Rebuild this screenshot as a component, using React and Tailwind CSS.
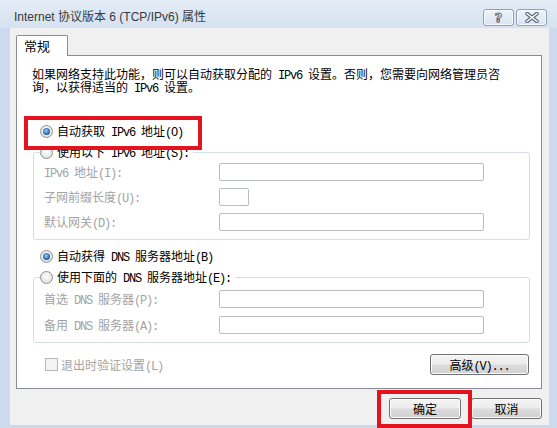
// SimSun-like text: ASCII runs get a narrow monospace (6px advance), CJK stays 12px
function T({ children }) {
  const parts = children.split(/([\x20-\x7e]+)/)
  return (
    <span className="whitespace-pre">
      {parts.map((p, i) =>
        /^[\x20-\x7e]+$/.test(p)
          ? <span key={i} className="font-['Liberation_Mono',monospace] text-[12px] tracking-[-1.2px] leading-[0]">{p}</span>
          : p
      )}
    </span>
  )
}

function Radio({ checked }) {
  return (
    <span className="w-[13px] h-[13px] rounded-full border border-[#8e8f8f] bg-[radial-gradient(circle_at_50%_40%,#ffffff,#e4e4e4_70%,#d0d0d0)] flex items-center justify-center shrink-0">
      {checked && (
        <span className="w-[7px] h-[7px] rounded-full bg-[radial-gradient(circle_at_45%_40%,#a6d0f2,#2d70b6_55%,#0f3b6e)]" />
      )}
    </span>
  )
}

function Field({ label, small }) {
  return (
    <div className="flex items-center h-[18px]">
      <span className="w-[175px] text-[#a3a3a3] whitespace-nowrap"><T>{label}</T></span>
      <span className={small ? 'w-[30px] h-[18px] border border-[#b8bcc2] rounded-[2px] bg-white' : 'w-[265px] h-[18px] border border-[#b8bcc2] rounded-[2px] bg-white'} />
    </div>
  )
}

function Btn({ children, className }) {
  return (
    <div className={`flex items-center justify-center h-[21px] border border-[#707070] rounded-[3px] bg-[linear-gradient(#f4f4f4_0%,#ececec_48%,#dcdcdc_52%,#d0d0d0_100%)] shadow-[inset_0_0_0_1px_#fcfcfc] text-black ${className}`}>
      {children}
    </div>
  )
}

function TitleBtn({ children }) {
  return (
    <div className="w-[31px] h-[17px] flex items-center justify-center border border-[#8e9fb8] rounded-[3px] bg-[linear-gradient(#eef3fa,#d9e3f0)] shadow-[inset_0_0_0_1px_#f7fafd]">
      {children}
    </div>
  )
}

export default function App() {
  return (
    <div className="relative w-[557px] h-[428px] overflow-hidden flex flex-col bg-[#cbdaed] font-['Noto_Sans_CJK_SC',sans-serif] text-[12px] leading-[12px] text-black">
      {/* title bar */}
      <div className="h-[28px] shrink-0 flex items-center pt-[6px] pl-[14px] pr-[10px] bg-[linear-gradient(#e4ecf6,#d6e2f1)]">
        <span className="flex-1 text-[12px] text-[#3a3a3a] font-['Liberation_Sans','Noto_Sans_CJK_SC',sans-serif] -mt-[1px]">
          Internet 协议版本 6 (TCP/IPv6) 属性
        </span>
        <div className="flex gap-[2px]">
          <TitleBtn>
            <span className="text-[13px] font-bold text-white [-webkit-text-stroke:1px_#55657c] font-['DejaVu_Sans',sans-serif] leading-[13px]">?</span>
          </TitleBtn>
          <TitleBtn>
            <svg width="14" height="11" viewBox="0 0 14 11">
              <path d="M2 1.5 L12 9.5 M12 1.5 L2 9.5" stroke="#55657c" strokeWidth="3.6" strokeLinecap="round" />
              <path d="M2 1.5 L12 9.5 M12 1.5 L2 9.5" stroke="#ffffff" strokeWidth="1.6" strokeLinecap="round" />
            </svg>
          </TitleBtn>
        </div>
      </div>

      {/* dialog body */}
      <div className="flex-1 ml-[10px] mr-[8px] mb-[3px] bg-[#f0f0f0] flex flex-col">
        <div className="pl-[6px] pt-[7px]">
          <div className="relative z-10 w-[52px] h-[21px] -mb-[1px] border border-b-0 border-[#898c95] rounded-t-[2px] bg-white flex items-center pl-[7px] text-[13px]">
            常规
          </div>
        </div>

        <div className="relative ml-[6px] w-[526px] h-[334px] border border-[#898c95] bg-white">
          <p className="pl-[15px] pt-[11px] leading-[13px] whitespace-nowrap">
            <T>如果网络支持此功能，则可以自动获取分配的 IPv6 设置。否则，您需要向网络管理员咨</T>
            <br />
            <T>询，以获得适当的 IPv6 设置。</T>
          </p>

          <div className="mt-[30px] pl-[23px] h-[16px] flex items-center gap-[4px]">
            <Radio checked />
            <T>自动获取 IPv6 地址(O)</T>
          </div>

          <fieldset className="mt-[5px] ml-[16px] w-[497px] border border-[#d5dfe5] rounded-[3px]">
            <legend className="ml-[6px] pr-[4px] h-[16px] flex items-center gap-[4px]">
              <Radio />
              <T>使用以下 IPv6 地址(S):</T>
            </legend>
            <div className="pl-[10px] pt-[3px] pb-[8px] flex flex-col gap-[7px]">
              <Field label="IPv6 地址(I):" />
              <Field label="子网前缀长度(U):" small />
              <Field label="默认网关(D):" />
            </div>
          </fieldset>

          <div className="mt-[8px] pl-[23px] h-[16px] flex items-center gap-[4px]">
            <Radio checked />
            <T>自动获得 DNS 服务器地址(B)</T>
          </div>

          <fieldset className="mt-[5px] ml-[16px] w-[497px] border border-[#d5dfe5] rounded-[3px]">
            <legend className="ml-[6px] pr-[4px] h-[16px] flex items-center gap-[4px]">
              <Radio />
              <T>使用下面的 DNS 服务器地址(E):</T>
            </legend>
            <div className="pl-[10px] pt-[5px] pb-[8px] flex flex-col gap-[8px]">
              <Field label="首选 DNS 服务器(P):" />
              <Field label="备用 DNS 服务器(A):" />
            </div>
          </fieldset>

          <div className="mt-[11px] pl-[28px] pr-[12px] flex items-center justify-between">
            <div className="flex items-center gap-[3px]">
              <span className="w-[13px] h-[13px] border border-[#b7b7b7] bg-[#f4f4f4]" />
              <span className="text-[#a3a3a3]"><T>退出时验证设置(L)</T></span>
            </div>
            <Btn className="w-[99px]"><T>高级(V)...</T></Btn>
          </div>

          {/* highlight box */}
          <div className="absolute left-[7px] top-[60px] w-[178px] h-[34px] border-[4px] border-[#e3141d]" />
        </div>

        <div className="mt-[9px] pr-[7px] flex justify-end gap-[10px]">
          <Btn className="w-[72px]">确定</Btn>
          <Btn className="w-[71px]">取消</Btn>
        </div>
      </div>

      {/* highlight box around OK */}
      <div className="absolute left-[377px] top-[390px] w-[95px] h-[38px] border-[4px] border-[#e3141d]" />
    </div>
  )
}
